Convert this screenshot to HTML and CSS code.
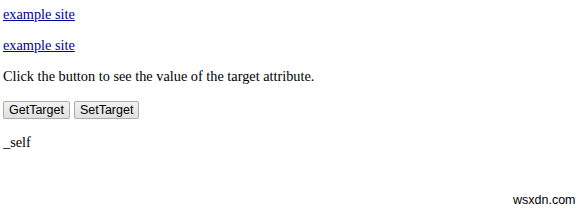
FILE: index.html
```html
<!DOCTYPE html>
<html lang="en">
<head>
    <meta charset="UTF-8">
    <title>Target attribute</title>
    <link rel="stylesheet" href="styles.css">
</head>
<body>
    <a href="#" class="site-link" id="firstLink">example site</a>
    <p><a href="#" class="site-link" id="secondLink">example site</a></p>
    <p>Click the button to see the value of the target attribute.</p>
    <div class="btn-row">
        <button class="target-btn">GetTarget</button>
        <button class="target-btn">SetTarget</button>
    </div>
    <p class="result">_self</p>

    <span class="watermark">wsxdn.com</span>
</body>
</html>
```

FILE: styles.css
```css
body {
    margin: 6px 3px;
    font-family: "Liberation Serif", serif;
    font-size: 14.3px;
    line-height: 16px;
    color: black;
    background: white;
}

.site-link {
    color: rgb(0, 0, 153);
}

p {
    margin: 15px 0;
}

.btn-row {
    display: flex;
    gap: 4px;
    margin-top: 17px;
}

.target-btn {
    height: 18px;
    font-family: "Liberation Sans", Arial, sans-serif;
    font-size: 12.5px;
    padding: 0 5px;
    background: linear-gradient(#f2f2f2, #e0e0e0);
    border: 1px solid #acacac;
    border-radius: 2px;
    color: black;
}

.watermark {
    position: absolute;
    left: 513px;
    top: 192px;
    font-family: "Liberation Sans", Arial, sans-serif;
    font-size: 12.5px;
    color: black;
}
```
